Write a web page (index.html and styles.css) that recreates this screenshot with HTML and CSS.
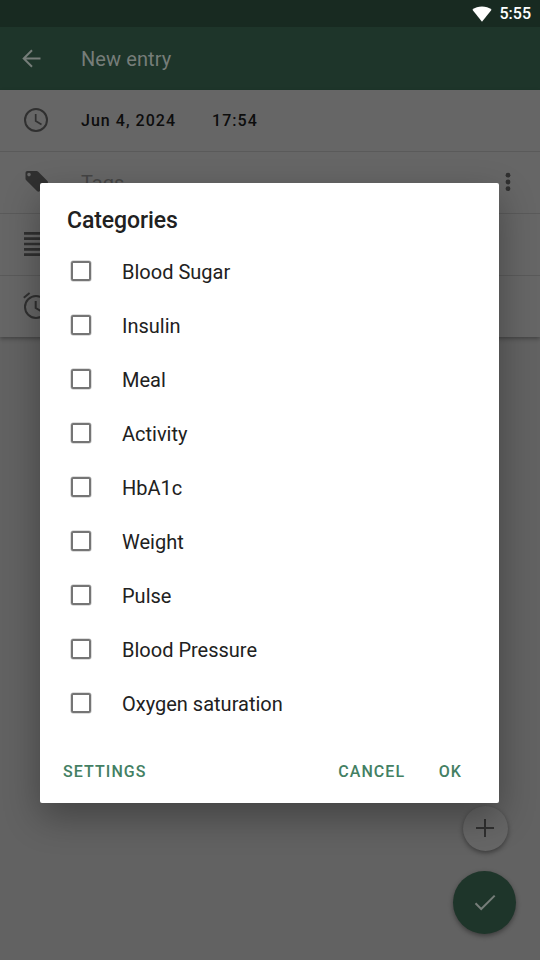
FILE: index.html
```html
<!DOCTYPE html>
<html lang="en">
<head>
<meta charset="utf-8">
<title>New entry</title>
<link rel="stylesheet" href="styles.css">
</head>
<body>
<div class="screen">
  <div class="statusbar">
    <svg class="wifi" width="20" height="16" viewBox="0 0 20 16"><path d="M.4 3.8C5.600-.6 14.400-.6 19.600 3.800L10 15.700z" fill="#fff"/></svg>
    <span class="clock">5:55</span>
  </div>
  <header class="appbar">
    <svg class="back" width="20" height="20" viewBox="0 0 20 20" fill="none" stroke="#767d79" stroke-width="2"><path d="M18.500 9.500H2M10 1.200L1.700 9.500l8.300 8.300"/></svg>
    <span class="title">New entry</span>
  </header>
  <main class="form">
    <div class="row">
      <svg class="icon" width="26" height="26" viewBox="0 0 26 26" fill="none" stroke="#303030" stroke-width="2"><circle cx="13" cy="13" r="11"/><path d="M12.700 7v7l5.800 3.400" stroke-width="1.700"/></svg>
      <span class="date">Jun 4, 2024</span>
      <span class="time">17:54</span>
    </div>
    <div class="row">
      <svg class="icon" width="26" height="26" viewBox="0 0 26 26"><path fill-rule="evenodd" d="M4.500 2h9c.7 0 1.200.2 1.700.700l9 9c1 1 1 2 0 3l-7.200 7.200c-1 1-2 1-3 0l-10.800-10.700c-.5-.5-.7-1-.7-1.700V4c0-1.200.8-2 2-2zM6 3.800a1.800 1.800 0 1 0 0 3.600a1.800 1.800 0 1 0 0-3.600z" fill="#303030"/></svg>
      <span class="hint">Tags</span>
      <svg class="more" width="6" height="20" viewBox="0 0 6 20" fill="#303030"><circle cx="3" cy="3.200" r="2.400"/><circle cx="3" cy="10" r="2.400"/><circle cx="3" cy="16.700" r="2.400"/></svg>
    </div>
    <div class="row">
      <svg class="icon" width="26" height="26" viewBox="0 0 26 26" fill="none" stroke="#303030" stroke-width="2.700"><path d="M1 2.400h24M1 7.700h24M1 13h24M1 18.300h24M1 23.600h24"/></svg>
    </div>
    <div class="row">
      <svg class="icon" width="26" height="28" viewBox="0 0 26 28" fill="none" stroke="#303030" stroke-width="2"><circle cx="13" cy="15" r="11"/><path d="M12.700 9v7l5.800 3.400M.8 5.800l5.800-4.900M25.200 5.800l-5.800-4.900"/></svg>
    </div>
  </main>
  <button class="fab add" aria-label="Add"><svg width="20" height="20" viewBox="0 0 20 20" fill="none" stroke="#303030" stroke-width="2"><path d="M10 1v18M1 10h18"/></svg></button>
  <button class="fab save" aria-label="Save"><svg width="22" height="18" viewBox="0 0 22 18" fill="none" stroke="#767d79" stroke-width="2"><path d="M1.500 9.300l5.700 5.700L20.700 1.600"/></svg></button>
  <section class="dialog" role="dialog">
    <h1>Categories</h1>
    <div class="options">
      <label class="option"><span class="box"></span><span>Blood Sugar</span></label>
      <label class="option"><span class="box"></span><span>Insulin</span></label>
      <label class="option"><span class="box"></span><span>Meal</span></label>
      <label class="option"><span class="box"></span><span>Activity</span></label>
      <label class="option"><span class="box"></span><span>HbA1c</span></label>
      <label class="option"><span class="box"></span><span>Weight</span></label>
      <label class="option"><span class="box"></span><span>Pulse</span></label>
      <label class="option"><span class="box"></span><span>Blood Pressure</span></label>
      <label class="option"><span class="box"></span><span>Oxygen saturation</span></label>
    </div>
    <footer class="actions">
      <span class="settings">SETTINGS</span>
      <span class="cancel">CANCEL</span>
      <span class="ok">OK</span>
    </footer>
  </section>
</div>
</body>
</html>
```
FILE: styles.css
```css
* { box-sizing: border-box; }
body { margin: 0; font-family: Roboto, sans-serif; }
.screen { position: relative; width: 540px; height: 960px; overflow: hidden; background: #626262; }
.statusbar { display: flex; align-items: center; justify-content: flex-end; height: 27px; padding-right: 9px; background: #182a21; color: #fff; }
.wifi { margin-right: 8px; }
.clock { font-size: 16px; font-weight: 500; line-height: 27px; }
.appbar { display: flex; align-items: center; height: 63px; padding-left: 22px; background: #1e352a; }
.back { margin-right: 39px; }
.title { font-size: 20px; letter-spacing: .1px; color: #767d79; }
.form { height: 247px; background: #666; box-shadow: 0 2px 4px rgba(0,0,0,.3); }
.row { display: flex; align-items: center; height: 62px; padding: 0 29px 0 23px; border-bottom: 1px solid #5a5a5a; }
.row:last-child { height: 61px; border-bottom: 0; }
.icon { margin: 0 32px 2px 0; }
.date, .time { font-size: 16px; font-weight: 500; letter-spacing: 1.030px; color: #0d0d0d; }
.time { margin-left: 36px; }
.hint { font-size: 20px; color: #454545; }
.more { margin: 0 0 1px auto; }
.fab { position: absolute; display: flex; align-items: center; justify-content: center; padding: 0; border: 0; border-radius: 50%; box-shadow: 0 2px 5px rgba(0,0,0,.4); }
.add { left: 463px; top: 806px; width: 45px; height: 45px; padding: 0 1px 1px 0; background: #666; }
.save { left: 453px; top: 871px; width: 63px; height: 63px; background: #1e352a; }
.dialog { position: absolute; left: 40px; top: 183px; width: 459px; height: 620px; background: #fff; border-radius: 2px; box-shadow: 0 14px 36px rgba(0,0,0,.32); color: #212121; }
h1 { margin: 0; padding: 23px 27px 0; font-size: 23px; font-weight: 500; line-height: 30px; letter-spacing: -.1px; }
.options { padding-top: 9px; }
.option { display: flex; align-items: center; height: 54px; padding-left: 31px; font-size: 20px; }
.box { width: 20px; height: 20px; margin: 0 31px 2px 0; border: 2px solid #757575; border-radius: 2px; box-shadow: 0 0 0 .5px #bbb; }
.actions { display: flex; align-items: center; height: 54px; margin-top: 13px; padding: 0 37px 0 23px; font-size: 16px; font-weight: 500; letter-spacing: 1.080px; color: #448063; }
.cancel { margin-left: auto; margin-right: 33.500px; }
```
